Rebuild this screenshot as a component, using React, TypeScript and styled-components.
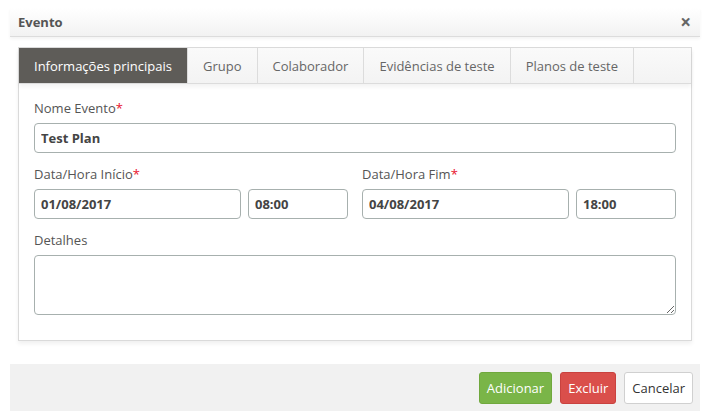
import React, { useState } from 'react';
import styled, { createGlobalStyle } from 'styled-components';

const GlobalStyle = createGlobalStyle`
    body {
        margin: 0;
        background: #fff;
        font-family: "Open Sans", "Liberation Sans", sans-serif;
        font-size: 13px;
        color: #555;
    }
`;

const Modal = styled.div`
    width: 690px;
    margin: 8px 0 0 10px;
`;

const Header = styled.div`
    display: flex;
    align-items: center;
    justify-content: space-between;
    height: 28px;
    padding: 0 9px 0 8px;
    background: linear-gradient(#ffffff, #f2f2f2);
    border-bottom: 1px solid #dcdcdc;
    box-shadow: 0 2px 3px rgba(0, 0, 0, 0.05);
`;

const Title = styled.h4`
    margin: 0;
    font-size: 13px;
    font-weight: 700;
    color: #555;
`;

const Close = styled.span`
    font-size: 19px;
    line-height: 1;
    font-weight: 700;
    color: #666;
    cursor: pointer;
`;

const Body = styled.div`
    padding: 10px 8px 23px;
`;

const Panel = styled.div`
    border: 1px solid #dadada;
    box-shadow: 0 3px 4px rgba(0, 0, 0, 0.06);
`;

const TabBar = styled.div`
    display: flex;
    height: 35px;
    background: linear-gradient(#fafafa, #f3f3f3);
    border-bottom: 1px solid #dcdcdc;
    box-shadow: 0 3px 4px rgba(0, 0, 0, 0.05);
`;

const Tab = styled.div<{ $active?: boolean }>`
    display: flex;
    align-items: center;
    padding: 0 15px;
    border-right: 1px solid #dcdcdc;
    background: ${p => (p.$active ? '#5e5c58' : 'transparent')};
    color: ${p => (p.$active ? '#fff' : '#666')};
    cursor: pointer;
    white-space: nowrap;
`;

const Content = styled.div`
    padding: 15px 15px 25px;
    display: flex;
    flex-direction: column;
    gap: 12px;
`;

const Row = styled.div`
    display: grid;
    grid-template-columns: 1fr 1fr;
    column-gap: 14px;
`;

const Field = styled.div`
    display: flex;
    flex-direction: column;
`;

const Label = styled.label`
    line-height: 18px;
    margin-bottom: 6px;
    color: #555;
`;

const Required = styled.span`
    color: #e8112d;
`;

const Inputs = styled.div`
    display: flex;
    gap: 7px;
`;

const Input = styled.input<{ $width?: number }>`
    box-sizing: border-box;
    height: 30px;
    width: ${p => (p.$width ? `${p.$width}px` : '100%')};
    padding: 0 6px;
    border: 1px solid #a7b0ae;
    border-radius: 4px;
    font-family: inherit;
    font-size: 13px;
    font-weight: 700;
    color: #444;
    outline: none;
`;

const TextArea = styled.textarea`
    box-sizing: border-box;
    height: 60px;
    width: 100%;
    border: 1px solid #a7b0ae;
    border-radius: 4px;
    font-family: inherit;
    font-size: 13px;
    resize: vertical;
    outline: none;
`;

const Footer = styled.div`
    display: flex;
    justify-content: flex-end;
    align-items: center;
    gap: 8px;
    height: 47px;
    padding: 0 7px;
    background: #f1f1f1;
`;

const Button = styled.button<{ $variant: 'success' | 'danger' | 'default' }>`
    height: 32px;
    padding: 0 7px;
    border-radius: 3px;
    font-family: inherit;
    font-size: 13px;
    cursor: pointer;
    border: 1px solid
        ${p => (p.$variant === 'success' ? '#70a83d' : p.$variant === 'danger' ? '#c9423f' : '#d0d0d0')};
    background: ${p => (p.$variant === 'success' ? '#7ab548' : p.$variant === 'danger' ? '#da4f4b' : '#fff')};
    color: ${p => (p.$variant === 'default' ? '#333' : '#fff')};
`;

const tabs = ['Informações principais', 'Grupo', 'Colaborador', 'Evidências de teste', 'Planos de teste'];

const App: React.FC = () => {
    const [active, setActive] = useState(0);
    const [form, setForm] = useState({
        nome: 'Test Plan',
        dataInicio: '01/08/2017',
        horaInicio: '08:00',
        dataFim: '04/08/2017',
        horaFim: '18:00',
        detalhes: '',
    });

    const handleChange = (e: React.ChangeEvent<HTMLInputElement | HTMLTextAreaElement>) => {
        const { name, value } = e.target;
        setForm(prev => ({ ...prev, [name]: value }));
    };

    return (
        <>
            <GlobalStyle />
            <Modal>
                <Header>
                    <Title>Evento</Title>
                    <Close>×</Close>
                </Header>
                <Body>
                    <Panel>
                        <TabBar>
                            {tabs.map((t, i) => (
                                <Tab key={t} $active={i === active} onClick={() => setActive(i)}>
                                    {t}
                                </Tab>
                            ))}
                        </TabBar>
                        <Content>
                            <Field>
                                <Label>Nome Evento<Required>*</Required></Label>
                                <Input name="nome" value={form.nome} onChange={handleChange} />
                            </Field>
                            <Row>
                                <Field>
                                    <Label>Data/Hora Início<Required>*</Required></Label>
                                    <Inputs>
                                        <Input name="dataInicio" value={form.dataInicio} onChange={handleChange} $width={207} />
                                        <Input name="horaInicio" value={form.horaInicio} onChange={handleChange} $width={100} />
                                    </Inputs>
                                </Field>
                                <Field>
                                    <Label>Data/Hora Fim<Required>*</Required></Label>
                                    <Inputs>
                                        <Input name="dataFim" value={form.dataFim} onChange={handleChange} $width={207} />
                                        <Input name="horaFim" value={form.horaFim} onChange={handleChange} $width={100} />
                                    </Inputs>
                                </Field>
                            </Row>
                            <Field>
                                <Label>Detalhes</Label>
                                <TextArea name="detalhes" value={form.detalhes} onChange={handleChange} />
                            </Field>
                        </Content>
                    </Panel>
                </Body>
                <Footer>
                    <Button $variant="success">Adicionar</Button>
                    <Button $variant="danger">Excluir</Button>
                    <Button $variant="default">Cancelar</Button>
                </Footer>
            </Modal>
        </>
    );
};

export default App;
